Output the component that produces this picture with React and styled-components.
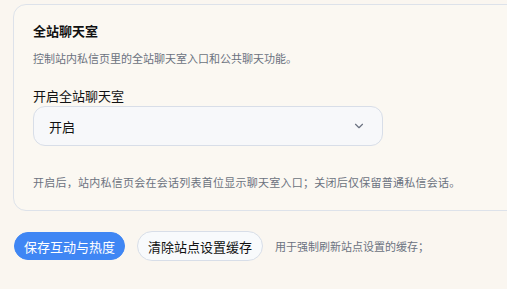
import React from "react";
import styled, { createGlobalStyle } from "styled-components";
import { ChevronDown } from "lucide-react";

const Global = createGlobalStyle`
  html, body { margin: 0; padding: 0; overflow: hidden; }
  body {
    background: #faf6f0;
    font-family: "Noto Sans CJK SC", "Noto Sans", sans-serif;
    color: #111827;
  }
`;

const Page = styled.div`
  padding: 4px 0 0 13px;
  width: 494px;
  overflow: hidden;
`;

const Card = styled.section`
  width: 640px;
  box-sizing: border-box;
  border: 1px solid #dde2ea;
  border-radius: 13px;
  background: #fbf8f2;
  padding: 17px 20px 20px 19px;
`;

const Title = styled.h3`
  margin: 0;
  font-size: 13px;
  line-height: 18px;
  font-weight: 700;
  color: #111111;
`;

const Desc = styled.p`
  margin: 10px 0 0;
  font-size: 11px;
  line-height: 16px;
  color: #6b7280;
  letter-spacing: ${(p) => p.$ls || "0"};
`;

const Label = styled.label`
  display: block;
  margin-top: 21px;
  font-size: 13px;
  line-height: 18px;
  color: #111111;
`;

const Select = styled.div`
  margin-top: 1px;
  width: 350px;
  height: 40px;
  box-sizing: border-box;
  border: 1px solid #d8dee8;
  border-radius: 12px;
  background: #f7f8fa;
  display: flex;
  align-items: center;
  justify-content: space-between;
  padding: 0 16px 0 15px;
  font-size: 13px;
  color: #111111;
  svg { color: #6b7280; }
`;

const Help = styled(Desc)`
  margin-top: 28px;
`;

const Actions = styled.div`
  display: flex;
  align-items: center;
  gap: 12px;
  margin-top: 20px;
  margin-left: 1px;
`;

const Button = styled.button`
  height: ${(p) => (p.$primary ? "28px" : "30px")};
  box-sizing: border-box;
  border-radius: 999px;
  font-family: inherit;
  font-size: 13px;
  padding: 0 ${(p) => (p.$primary ? "9px" : "10px")};
  border: 1px solid ${(p) => (p.$primary ? "#3f86f4" : "#d8dee8")};
  background: ${(p) => (p.$primary ? "#3f86f4" : "#f8fafc")};
  color: ${(p) => (p.$primary ? "#ffffff" : "#111111")};
  display: flex;
  align-items: center;
  cursor: pointer;
`;

const Note = styled.span`
  font-size: 11px;
  color: #6b7280;
`;

export default function App() {
  return (
    <>
      <Global />
      <Page>
        <Card>
          <Title>全站聊天室</Title>
          <Desc>控制站内私信页里的全站聊天室入口和公共聊天功能。</Desc>
          <Label>开启全站聊天室</Label>
          <Select>
            <span>开启</span>
            <ChevronDown size={14} strokeWidth={2} />
          </Select>
          <Help $ls="0.25px">
            开启后，站内私信页会在会话列表首位显示聊天室入口；关闭后仅保留普通私信会话。
          </Help>
        </Card>
        <Actions>
          <Button $primary>保存互动与热度</Button>
          <Button>清除站点设置缓存</Button>
          <Note>用于强制刷新站点设置的缓存；</Note>
        </Actions>
      </Page>
    </>
  );
}
